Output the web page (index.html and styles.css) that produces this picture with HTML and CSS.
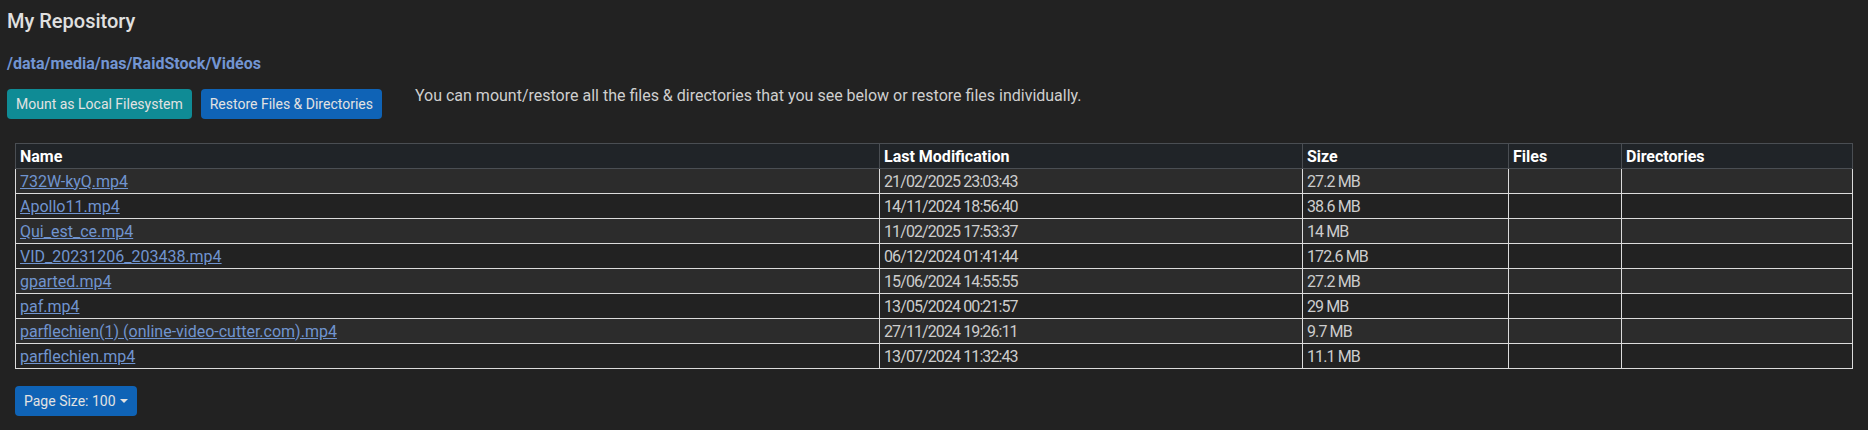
FILE: index.html
```html
<!DOCTYPE html>
<html lang="en">

<head>
  <meta charset="UTF-8" />
  <meta name="viewport" content="width=device-width, initial-scale=1.0" />
  <title>My Repository</title>
  <link rel="stylesheet" href="styles.css">
</head>

<body>
  <div class="page">
    <h5 class="title">My Repository</h5>
    <div class="path">/data/media/nas/RaidStock/Vidéos</div>

    <div class="toolbar">
      <button class="btn btn-teal">Mount as Local Filesystem</button>
      <button class="btn btn-blue">Restore Files &amp; Directories</button>
      <p class="hint">You can mount/restore all the files &amp; directories that you see below or restore files individually.</p>
    </div>

    <div class="results">
      <table class="listing">
        <colgroup>
          <col class="c-name">
          <col class="c-mod">
          <col class="c-size">
          <col class="c-files">
          <col class="c-dirs">
        </colgroup>
        <thead>
          <tr>
            <th>Name</th>
            <th>Last Modification</th>
            <th>Size</th>
            <th>Files</th>
            <th>Directories</th>
          </tr>
        </thead>
        <tbody>
          <tr><td><a href="#">732W-kyQ.mp4</a></td><td class="num">21/02/2025 23:03:43</td><td class="num">27.2 MB</td><td></td><td></td></tr>
          <tr><td><a href="#">Apollo11.mp4</a></td><td class="num">14/11/2024 18:56:40</td><td class="num">38.6 MB</td><td></td><td></td></tr>
          <tr><td><a href="#">Qui_est_ce.mp4</a></td><td class="num">11/02/2025 17:53:37</td><td class="num">14 MB</td><td></td><td></td></tr>
          <tr><td><a href="#">VID_20231206_203438.mp4</a></td><td class="num">06/12/2024 01:41:44</td><td class="num">172.6 MB</td><td></td><td></td></tr>
          <tr><td><a href="#">gparted.mp4</a></td><td class="num">15/06/2024 14:55:55</td><td class="num">27.2 MB</td><td></td><td></td></tr>
          <tr><td><a href="#">paf.mp4</a></td><td class="num">13/05/2024 00:21:57</td><td class="num">29 MB</td><td></td><td></td></tr>
          <tr><td><a href="#">parflechien(1) (online-video-cutter.com).mp4</a></td><td class="num">27/11/2024 19:26:11</td><td class="num">9.7 MB</td><td></td><td></td></tr>
          <tr><td><a href="#">parflechien.mp4</a></td><td class="num">13/07/2024 11:32:43</td><td class="num">11.1 MB</td><td></td><td></td></tr>
        </tbody>
      </table>

      <button class="btn btn-blue dropdown-toggle">Page Size: 100</button>
    </div>
  </div>
</body>

</html>
```

FILE: styles.css
```css
body {
  margin: 0;
  padding: 0;
  background-color: #222222;
  color: #d0d0d0;
  font-family: Roboto, 'Noto Sans', sans-serif;
}

.page {
  padding: 9px 7px 0;
}

.title {
  margin: 0;
  font-size: 20px;
  font-weight: 500;
  line-height: 24px;
  color: #e0e0e0;
}

.path {
  margin-top: 19px;
  font-size: 16px;
  font-weight: bold;
  line-height: 24px;
  color: #7295d2;
}

.toolbar {
  display: flex;
  align-items: flex-start;
  margin-top: 13px;
  gap: 9px;
}

.btn {
  border: 1px solid transparent;
  border-radius: 4px;
  padding: 4px 8px;
  font-family: Roboto, sans-serif;
  font-size: 14px;
  line-height: 20px;
  color: #e2e2e2;
  cursor: pointer;
}

.btn-teal {
  background-color: #0f8b95;
}

.btn-blue {
  background-color: #0f63b6;
}

.hint {
  margin: -5px 0 0 24px;
  font-size: 16px;
  line-height: 24px;
  color: #cfcfcf;
}

.results {
  margin: 24px 8px 0;
}

.listing {
  width: 100%;
  table-layout: fixed;
  border-collapse: collapse;
  margin-bottom: 17px;
}

.c-name { width: 864px; }
.c-mod { width: 423px; }
.c-size { width: 206px; }
.c-files { width: 113px; }

.listing th {
  background-color: #202428;
  border: 1px solid #4a4e53;
  padding: 0 4px;
  height: 24px;
  text-align: left;
  font-size: 16px;
  font-weight: bold;
  color: #ffffff;
}

.listing td {
  border: 1px solid #dcdcdc;
  padding: 0 4px;
  height: 24px;
  font-size: 16px;
  color: #cdcdcd;
  white-space: nowrap;
}

.listing td.num {
  letter-spacing: -0.9px;
}

.listing thead th {
  border-bottom-color: #4a4e53;
}

.listing tbody tr:nth-child(odd) td {
  background-color: #2c2c2c;
}

.listing tbody tr:nth-child(even) td {
  background-color: #222222;
}

.listing a {
  color: #7094cf;
}

.dropdown-toggle::after {
  content: "";
  display: inline-block;
  margin-left: 4px;
  vertical-align: 3px;
  border-top: 4px solid;
  border-left: 4px solid transparent;
  border-right: 4px solid transparent;
}
```
